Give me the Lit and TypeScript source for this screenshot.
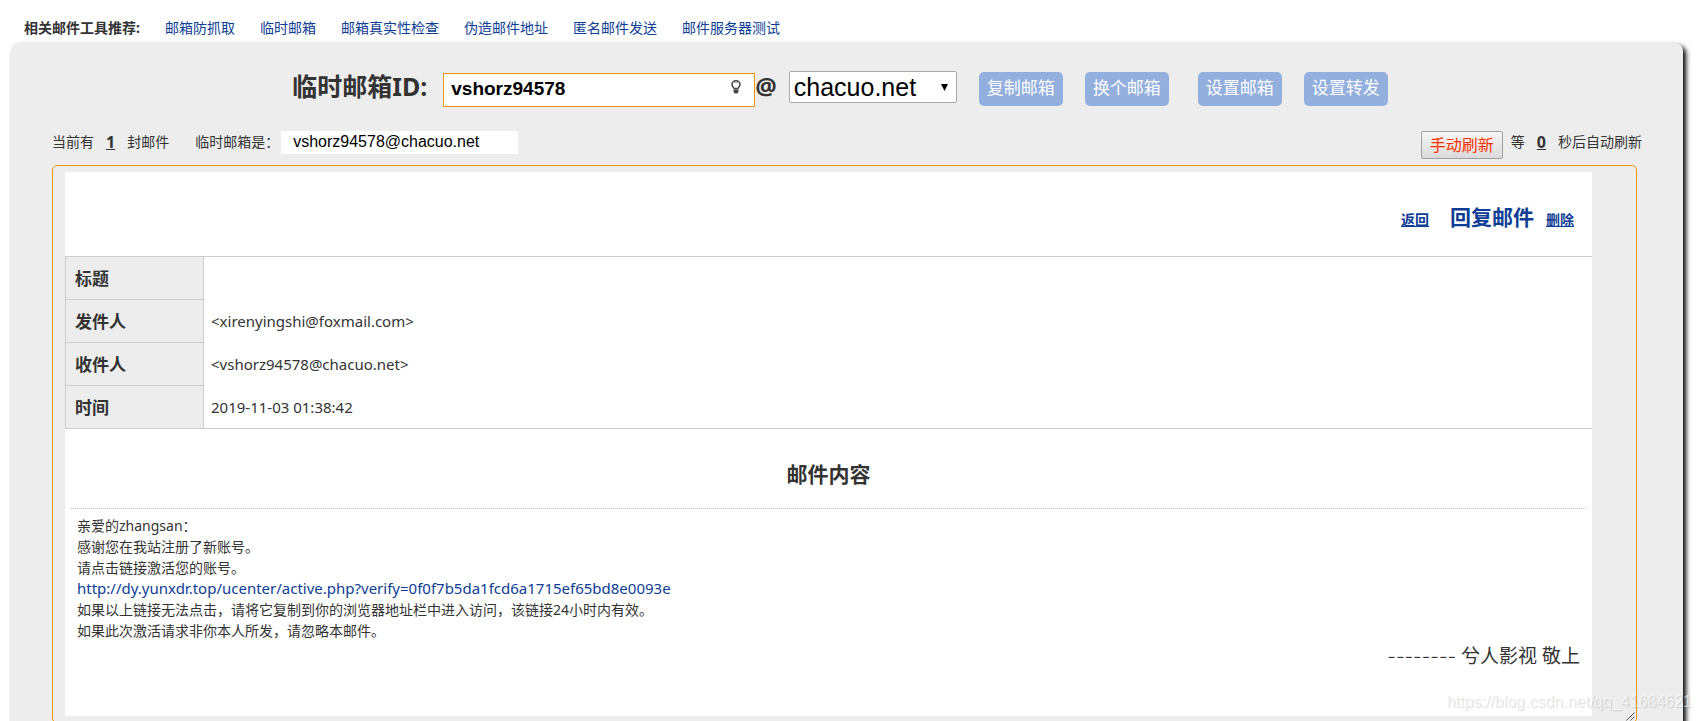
import { LitElement, html, css } from "lit";
import { customElement, property, state } from "lit/decorators.js";

@customElement("mail-toolbar")
export class MailToolbar extends LitElement {
  @property() mailId = "";
  @property() domain = "";

  static styles = css`
    :host {
      display: flex;
      justify-content: center;
      align-items: flex-start;
      padding: 28px 14px 0 0;
      color: #333;
    }
    * {
      box-sizing: border-box;
    }
    .title {
      font-size: 25px;
      line-height: 30px;
      font-weight: 700;
      margin-right: 16px;
      white-space: nowrap;
    }
    .field {
      position: relative;
      width: 312px;
      margin-top: 2px;
    }
    .id {
      display: block;
      width: 100%;
      height: 34px;
      margin: 0;
      padding: 0 40px 2px 7px;
      border: 1px solid #ea950c;
      background: #fff;
      color: #000;
      font: 700 19px "Liberation Sans", Arial, sans-serif;
      outline: none;
    }
    .bulb {
      position: absolute;
      right: 14px;
      top: 7px;
      width: 10px;
      height: 14px;
    }
    .at {
      font: 700 24px/30px "Open Sans", "Noto Sans", sans-serif;
      margin-right: 12px;
    }
    .select {
      position: relative;
      width: 168px;
      margin-right: 22px;
    }
    .domain {
      display: block;
      appearance: none;
      width: 100%;
      height: 32px;
      margin: 0;
      padding: 0 30px 0 4px;
      border: 1px solid #a9a9a9;
      border-radius: 2px;
      background: #fff;
      color: #000;
      font: 25px/30px "Liberation Sans", Arial, sans-serif;
    }
    .arrow {
      position: absolute;
      right: 9px;
      top: 13px;
      width: 7px;
      height: 7px;
      pointer-events: none;
    }
    .group {
      display: flex;
      gap: 22px;
      padding-top: 1px;
      margin-right: 29px;
    }
    .group:last-child {
      margin-right: 0;
    }
    .btn {
      height: 34px;
      padding: 0 8px 2px;
      border: 0;
      border-radius: 5px;
      background: #92afde;
      color: #fff;
      font: inherit;
      font-size: 17px;
      line-height: 32px;
      white-space: nowrap;
    }
  `;

  render() {
    return html`
      <label class="title" for="mail-id">临时邮箱ID:</label>
      <div class="field">
        <input id="mail-id" class="id" type="text" .value=${this.mailId} />
        <svg class="bulb" viewBox="0 0 10 14" aria-hidden="true">
          <path
            d="M3.2 8.6C3.1 7.6 1 6.8 1 4.6A4 3.8 0 0 1 9 4.6C9 6.8 6.900 7.600 6.800 8.600Z"
            fill="none"
            stroke="#444"
            stroke-width="1.5"
          />
          <path d="M3 2.600h4" stroke="#999" stroke-width=".8" />
          <path d="M2.500 9.500h5v2.500l-1.500 1.500h-2l-1.500-1.500z" fill="#444" />
        </svg>
      </div>
      <span class="at">@</span>
      <div class="select">
        <select class="domain" aria-label="邮箱域名">
          <option>${this.domain}</option>
        </select>
        <svg class="arrow" viewBox="0 0 7 7" aria-hidden="true">
          <path d="M0 0h7l-3.500 7z" fill="#000" />
        </svg>
      </div>
      <div class="group">
        <button class="btn" type="button">复制邮箱</button>
        <button class="btn" type="button">换个邮箱</button>
      </div>
      <div class="group">
        <button class="btn" type="button">设置邮箱</button>
        <button class="btn" type="button">设置转发</button>
      </div>
    `;
  }
}

@customElement("mail-status")
export class MailStatus extends LitElement {
  @property() address = "";
  @property({ type: Number }) count = 0;
  @property({ type: Number }) seconds = 0;

  static styles = css`
    :host {
      display: flex;
      justify-content: space-between;
      align-items: flex-start;
      padding: 24px 41px 6px 41px;
      font-size: 14px;
      line-height: 22px;
      color: #333;
    }
    .part {
      display: flex;
      align-items: flex-start;
      white-space: nowrap;
    }
    .num {
      margin: 0 12px;
      font-size: 16px;
      text-decoration: underline;
    }
    .label {
      margin-left: 26px;
    }
    .address {
      box-sizing: border-box;
      width: 237px;
      height: 23px;
      margin: 0 0 0 2px;
      padding: 0 12px 2px;
      border: 0;
      background: #fff;
      color: #000;
      font: 16px "Liberation Sans", Arial, sans-serif;
    }
    .refresh {
      box-sizing: border-box;
      height: 28px;
      margin-right: 8px;
      padding: 0 8px;
      border: 1px solid #a0a0a0;
      border-radius: 2px;
      background: linear-gradient(#f6f6f6, #dadada);
      color: #ff3300;
      font: inherit;
      font-size: 16px;
      line-height: 26px;
    }
  `;

  render() {
    return html`
      <div class="part">
        <span>当前有</span><b class="num">${this.count}</b><span>封邮件</span>
        <label class="label" for="address">临时邮箱是：</label>
        <input id="address" class="address" type="text" readonly .value=${this.address} />
      </div>
      <div class="part">
        <button class="refresh" type="button">手动刷新</button>
        <span>等</span><b class="num">${this.seconds}</b><span>秒后自动刷新</span>
      </div>
    `;
  }
}

@customElement("mail-view")
export class MailView extends LitElement {
  @state() private rows = [
    { label: "标题", value: "" },
    { label: "发件人", value: "<xirenyingshi@foxmail.com>" },
    { label: "收件人", value: "<vshorz94578@chacuo.net>" },
    { label: "时间", value: "2019-11-03 01:38:42" },
  ];

  static styles = css`
    :host {
      display: block;
      position: relative;
      margin: 0 46px 0 41px;
      padding: 6px 44px 6px 12px;
      border: 1px solid #ea950c;
      border-radius: 5px;
      color: #333;
    }
    a {
      color: #0d3d94;
    }
    .sheet {
      background: #fff;
      padding-bottom: 44px;
    }
    .actions {
      display: flex;
      justify-content: flex-end;
      align-items: baseline;
      height: 84px;
      box-sizing: border-box;
      padding: 29px 18px 0 0;
      font-size: 14px;
      line-height: 32px;
      font-weight: 700;
    }
    .reply {
      margin: 0 12px 0 21px;
      font-size: 21px;
      text-decoration: none;
    }
    .meta {
      width: 100%;
      border-collapse: collapse;
      border-top: 1px solid #ccc;
      border-bottom: 1px solid #ccc;
    }
    .meta th {
      box-sizing: border-box;
      width: 138px;
      height: 43px;
      padding: 2px 0 0 9px;
      border: 1px solid #ccc;
      background: #ededed;
      text-align: left;
      font-size: 17px;
      line-height: 24px;
    }
    .meta td {
      padding: 0 7px;
      font-size: 15px;
      line-height: 20px;
    }
    .heading {
      margin: 0 6px;
      padding: 29px 0 18px;
      border-bottom: 1px dotted #bbb;
      text-align: center;
      font-size: 21px;
      line-height: 32px;
      font-weight: 700;
    }
    .body {
      padding: 6px 12px 0;
      font-size: 14px;
      line-height: 21px;
    }
    .body p {
      margin: 0;
    }
    .body a {
      display: block;
      font-size: 15px;
      text-decoration: none;
    }
    .body .sign {
      text-align: right;
      font-size: 19px;
      line-height: 30px;
    }
    .dashes {
      font-family: Inter, sans-serif;
      font-weight: 300;
    }
    .grip {
      position: absolute;
      right: 1px;
      bottom: 1px;
      width: 9px;
      height: 9px;
    }
  `;

  render() {
    return html`
      <div class="sheet">
        <div class="actions">
          <a href="#back">返回</a>
          <a class="reply" href="#reply">回复邮件</a>
          <a href="#delete">删除</a>
        </div>
        <table class="meta">
          ${this.rows.map(
            (r) => html`<tr>
              <th scope="row">${r.label}</th>
              <td>${r.value}</td>
            </tr>`
          )}
        </table>
        <div class="heading">邮件内容</div>
        <div class="body">
          <p>亲爱的zhangsan：</p>
          <p>感谢您在我站注册了新账号。</p>
          <p>请点击链接激活您的账号。</p>
          <p><a href="#verify">http://dy.yunxdr.top/ucenter/active.php?verify=0f0f7b5da1fcd6a1715ef65bd8e0093e</a></p>
          <p>如果以上链接无法点击，请将它复制到你的浏览器地址栏中进入访问，该链接24小时内有效。</p>
          <p>如果此次激活请求非你本人所发，请忽略本邮件。</p>
          <p class="sign"><span class="dashes">--------</span> 兮人影视 敬上</p>
        </div>
      </div>
      <svg class="grip" viewBox="0 0 9 9" aria-hidden="true">
        <path d="M.5 8.500l8-8M4.500 8.500l4-4" stroke="#555" fill="none" />
      </svg>
    `;
  }
}

@customElement("app-root")
export class AppRoot extends LitElement {
  @state() private links = ["邮箱防抓取", "临时邮箱", "邮箱真实性检查", "伪造邮件地址", "匿名邮件发送", "邮件服务器测试"];

  static styles = css`
    :host {
      display: block;
      position: relative;
      height: 100vh;
      overflow: hidden;
      background: #fff;
      color: #333;
      font-family: "Noto Sans", "Noto Sans CJK SC", sans-serif;
    }
    .nav {
      display: flex;
      gap: 25px;
      padding: 17px 24px 4px;
      font-size: 14px;
      line-height: 22px;
      white-space: nowrap;
    }
    .nav a {
      color: #0d3d94;
      text-decoration: none;
    }
    .panel {
      margin: 0 17px 0 11px;
      padding-bottom: 40px;
      border-radius: 8px;
      background: #ededed;
      box-shadow: 3px 3px 5px #000;
    }
    .mark {
      position: absolute;
      right: 8px;
      bottom: 8px;
      font: 16px/22px "Liberation Sans", Arial, sans-serif;
      color: rgba(255, 255, 255, 0.6);
      text-shadow: 1px 1px 1px rgba(0, 0, 0, 0.15);
    }
  `;

  render() {
    return html`
      <nav class="nav">
        <b>相关邮件工具推荐:</b>
        ${this.links.map((t) => html`<a href="#tool">${t}</a>`)}
      </nav>
      <main class="panel">
        <mail-toolbar mailId="vshorz94578" domain="chacuo.net"></mail-toolbar>
        <mail-status address="vshorz94578@chacuo.net" count="1" seconds="0"></mail-status>
        <mail-view></mail-view>
      </main>
      <div class="mark">https://blog.csdn.net/qq_41684621</div>
    `;
  }
}
